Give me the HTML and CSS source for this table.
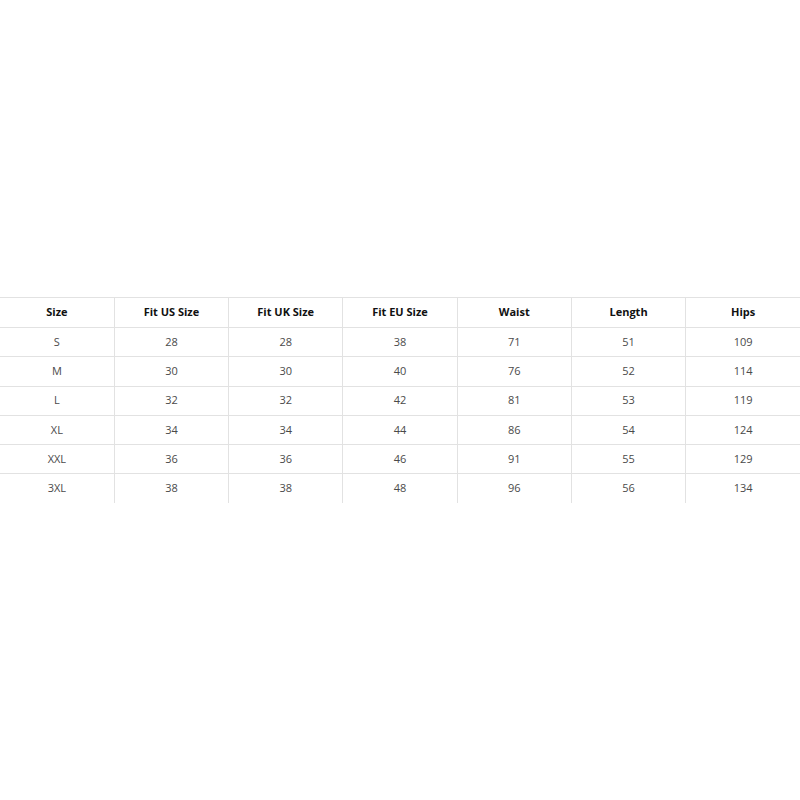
FILE: index.html
```html
<!DOCTYPE html>
<html>
<head>
<meta charset="utf-8">
<link rel="stylesheet" href="styles.css">
</head>
<body>
<div class="wrap">
<table class="sizes">
<thead>
<tr><th>Size</th><th>Fit US Size</th><th>Fit UK Size</th><th>Fit EU Size</th><th>Waist</th><th>Length</th><th>Hips</th></tr>
</thead>
<tbody>
<tr><td>S</td><td>28</td><td>28</td><td>38</td><td>71</td><td>51</td><td>109</td></tr>
<tr><td>M</td><td>30</td><td>30</td><td>40</td><td>76</td><td>52</td><td>114</td></tr>
<tr><td>L</td><td>32</td><td>32</td><td>42</td><td>81</td><td>53</td><td>119</td></tr>
<tr><td>XL</td><td>34</td><td>34</td><td>44</td><td>86</td><td>54</td><td>124</td></tr>
<tr><td>XXL</td><td>36</td><td>36</td><td>46</td><td>91</td><td>55</td><td>129</td></tr>
<tr><td>3XL</td><td>38</td><td>38</td><td>48</td><td>96</td><td>56</td><td>134</td></tr>
</tbody>
</table>
</div>
</body>
</html>
```
FILE: styles.css
```css
html, body {
  margin: 0;
  padding: 0;
  background: #fff;
}
.wrap {
  padding-top: 297px;
}
.sizes {
  width: 800px;
  border-collapse: collapse;
  table-layout: fixed;
  font-family: "Open Sans", "Liberation Sans", sans-serif;
  font-size: 11px;
}
.sizes th, .sizes td {
  padding: 0 0 2px 0;
  text-align: center;
  vertical-align: middle;
  border-left: 1px solid #e2e2e2;
}
.sizes th:first-child, .sizes td:first-child {
  border-left: none;
}
.sizes th {
  height: 27px;
  font-weight: 700;
  color: #111;
  border-top: 1px solid #e2e2e2;
  border-bottom: 1px solid #e2e2e2;
}
.sizes td {
  height: 26.3px;
  color: #4a4a4a;
  border-bottom: 1px solid #e2e2e2;
}
.sizes tbody tr:last-child td {
  border-bottom: none;
}
```
